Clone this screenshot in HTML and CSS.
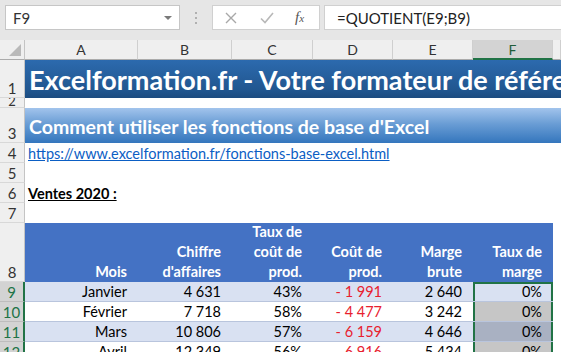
FILE: index.html
```html
<!DOCTYPE html>
<html lang="fr">
<head>
<meta charset="utf-8">
<link rel="stylesheet" href="styles.css">
</head>
<body>
<div class="app">
  <div class="fbar">
    <div class="namebox"><span class="nb-text">F9</span><span class="dd"></span></div>
    <div class="dots"><span></span><span></span><span></span></div>
    <div class="btns">
      <svg class="ico" width="14" height="14" viewBox="0 0 14 14"><path d="M2 2 L12 12 M12 2 L2 12" stroke="#a8a8a8" stroke-width="1.4" fill="none"/></svg>
      <svg class="ico" width="16" height="14" viewBox="0 0 16 14"><path d="M2 7.5 L6 11.5 L14 2" stroke="#b8b8b8" stroke-width="1.6" fill="none"/></svg>
      <span class="fx"><i>f</i><i class="sub">x</i></span>
    </div>
    <div class="formula">=QUOTIENT(E9;B9)</div>
  </div>
  <div class="sheet">
    <div class="row hdr">
      <div class="rh corner"><span class="tri"></span></div>
      <div class="ch ca">A</div>
      <div class="ch cb">B</div>
      <div class="ch cc">C</div>
      <div class="ch cd">D</div>
      <div class="ch ce">E</div>
      <div class="ch cf selh">F</div>
      <div class="ch cg"></div>
    </div>
    <div class="row r1">
      <div class="rh">1</div>
      <div class="wide title">Excelformation.fr - Votre formateur de référence</div>
    </div>
    <div class="row r2">
      <div class="rh">2</div>
      <div class="wide"></div>
    </div>
    <div class="row r3">
      <div class="rh">3</div>
      <div class="wide subtitle">Comment utiliser les fonctions de base d'Excel</div>
    </div>
    <div class="row rn">
      <div class="rh">4</div>
      <div class="wide"><a class="link" href="#">https://www.excelformation.fr/fonctions-base-excel.html</a></div>
    </div>
    <div class="row rn">
      <div class="rh">5</div>
      <div class="wide"></div>
    </div>
    <div class="row rn">
      <div class="rh">6</div>
      <div class="wide"><span class="ventes">Ventes 2020 :</span></div>
    </div>
    <div class="row rn">
      <div class="rh">7</div>
      <div class="wide"></div>
    </div>
    <div class="row r8">
      <div class="rh">8</div>
      <div class="th ca">Mois</div>
      <div class="th cb">Chiffre<br>d'affaires</div>
      <div class="th cc">Taux de<br>coût de<br>prod.</div>
      <div class="th cd">Coût de<br>prod.</div>
      <div class="th ce">Marge<br>brute</div>
      <div class="th cf">Taux de<br>marge</div>
      <div class="blank"></div>
    </div>
    <div class="row rd band">
      <div class="rh selr">9</div>
      <div class="td ca">Janvier</div>
      <div class="td cb">4 631</div>
      <div class="td cc">43%</div>
      <div class="td cd neg">- 1 991</div>
      <div class="td ce">2 640</div>
      <div class="td cf sel first active">0%</div>
      <div class="blank"></div>
    </div>
    <div class="row rd">
      <div class="rh selr">10</div>
      <div class="td ca">Février</div>
      <div class="td cb">7 718</div>
      <div class="td cc">58%</div>
      <div class="td cd neg">- 4 477</div>
      <div class="td ce">3 242</div>
      <div class="td cf sel">0%</div>
      <div class="blank"></div>
    </div>
    <div class="row rd band">
      <div class="rh selr">11</div>
      <div class="td ca">Mars</div>
      <div class="td cb">10 806</div>
      <div class="td cc">57%</div>
      <div class="td cd neg">- 6 159</div>
      <div class="td ce">4 646</div>
      <div class="td cf sel">0%</div>
      <div class="blank"></div>
    </div>
    <div class="row rd">
      <div class="rh selr">12</div>
      <div class="td ca">Avril</div>
      <div class="td cb">12 349</div>
      <div class="td cc">56%</div>
      <div class="td cd neg">- 6 916</div>
      <div class="td ce">5 434</div>
      <div class="td cf sel">0%</div>
      <div class="blank"></div>
    </div>
  </div>
</div>
</body>
</html>
```
FILE: styles.css
```css
* { box-sizing: border-box; }
html, body { margin: 0; padding: 0; }
body {
  width: 561px;
  height: 352px;
  overflow: hidden;
  background: #ffffff;
  font-family: "Lato", "Liberation Sans", sans-serif;
  color: #000;
}
.app { width: 561px; height: 352px; overflow: hidden; }

/* formula bar */
.fbar {
  height: 40px;
  background: #e6e6e6;
  display: flex;
  align-items: flex-start;
  padding-top: 5px;
}
.namebox {
  margin-left: 5px;
  width: 175px;
  height: 25px;
  background: #fff;
  border: 1px solid #c6c6c6;
  display: flex;
  align-items: center;
  padding-left: 7px;
  padding-right: 7px;
  font-size: 15px;
  color: #333;
}
.dd {
  margin-left: auto;
  width: 0; height: 0;
  border-left: 4px solid transparent;
  border-right: 4px solid transparent;
  border-top: 4px solid #7a7a7a;
}
.dots {
  width: 32px;
  height: 25px;
  display: flex;
  flex-direction: column;
  align-items: center;
  justify-content: center;
  gap: 3px;
}
.dots span { width: 2px; height: 2px; background: #b0b0b0; }
.btns {
  width: 108px;
  height: 25px;
  background: #fff;
  border: 1px solid #d0d0d0;
  display: flex;
  align-items: center;
  padding-left: 11px;
}
.btns .ico:nth-child(1) { margin-right: 21px; }
.btns .ico:nth-child(2) { margin-right: 20px; }
.fx {
  font-family: "Liberation Serif", serif;
  font-size: 15px;
  color: #555;
}
.fx .sub { font-size: 11px; }
.formula {
  margin-left: 4px;
  flex: 1;
  height: 25px;
  background: #fff;
  border: 1px solid #d0d0d0;
  border-right: none;
  display: flex;
  align-items: center;
  padding-left: 12px;
  font-size: 15px;
  color: #222;
}

/* sheet */
.sheet { width: 561px; }
.row { display: flex; width: 561px; }
.rh {
  width: 25px;
  flex: none;
  background: #efefef;
  border-right: 1px solid #c4c4c4;
  border-bottom: 1px solid #d8d8d8;
  color: #333;
  font-size: 15px;
  display: flex;
  align-items: flex-end;
  justify-content: center;
  line-height: 18px;
  overflow: hidden;
}
.ca { width: 113px; flex: none; }
.cb { width: 94px; flex: none; }
.cc { width: 81px; flex: none; }
.cd { width: 80px; flex: none; }
.ce { width: 80px; flex: none; }
.cf { width: 80px; flex: none; }
.cg { flex: 1; }
.blank { flex: 1; }

.hdr { height: 20px; }
.hdr .rh { border-bottom: 1px solid #ababab; }
.corner { position: relative; }
.tri {
  position: absolute;
  right: 3px;
  bottom: 3px;
  width: 0; height: 0;
  border-left: 12px solid transparent;
  border-bottom: 12px solid #b9b9b9;
}
.ch {
  background: #efefef;
  border-right: 1px solid #cfcfcf;
  border-bottom: 1px solid #ababab;
  font-size: 14px;
  color: #333;
  display: flex;
  align-items: center;
  justify-content: center;
}
.selh {
  background: #d3d3d3;
  color: #1f5c3a;
  border-bottom: 2px solid #217346;
}

.wide {
  flex: 1;
  overflow: hidden;
  white-space: nowrap;
  display: flex;
  align-items: flex-end;
}
.r1 { height: 38px; }
.r1 .wide {
  background: linear-gradient(#2c6aae, #21568f 80%, #1c4c80);
}
.title {
  color: #fff;
  font-weight: 700;
  font-size: 27px;
  padding-left: 4px;
  padding-bottom: 3px;
  line-height: 30px;
}
.r2 { height: 10px; }
.r2 .rh { align-items: flex-start; line-height: 6px; font-size: 13px; }
.r3 { height: 35px; }
.r3 .wide {
  background: linear-gradient(#a2c4ec, #6a9dd5 45%, #3476bd);
}
.subtitle {
  color: #fff;
  font-weight: 700;
  font-size: 19.5px;
  padding-left: 4px;
  padding-bottom: 5px;
  line-height: 22px;
}
.rn { height: 20px; }
.rn .wide { padding-left: 3px; font-size: 14.5px; line-height: 18px; }
.link { color: #0b5ec4; text-decoration: underline; }
.ventes { font-weight: 700; text-decoration: underline; }

.r8 { height: 59px; }
.th {
  background: #4472c4;
  color: #fff;
  font-weight: 700;
  font-size: 14.5px;
  line-height: 20px;
  text-align: right;
  padding-right: 11px;
  padding-bottom: 0px;
  display: flex;
  flex-direction: column;
  justify-content: flex-end;
}
.rd { height: 20px; }
.td {
  font-size: 14.5px;
  line-height: 19px;
  text-align: right;
  padding-right: 11px;
  border-bottom: 1px solid #b9c5dd;
  white-space: nowrap;
}
.band .td { background: #d9e1f2; }
.neg { color: #e8202e; }
.selr {
  background: #d3d3d3;
  color: #217346;
  border-right: 2px solid #217346;
  border-bottom: 1px solid #bdbdbd;
}
.sel {
  background: #c6c6c6;
  box-shadow: inset 2px 0 0 #217346, inset -2px 0 0 #217346;
}
.band .sel { background: #a9b1c2; }
.band .sel.active { background: #d9e1f2; }
.sel.first {
  box-shadow: inset 2px 0 0 #217346, inset -2px 0 0 #217346, inset 0 2px 0 #217346;
}
```
